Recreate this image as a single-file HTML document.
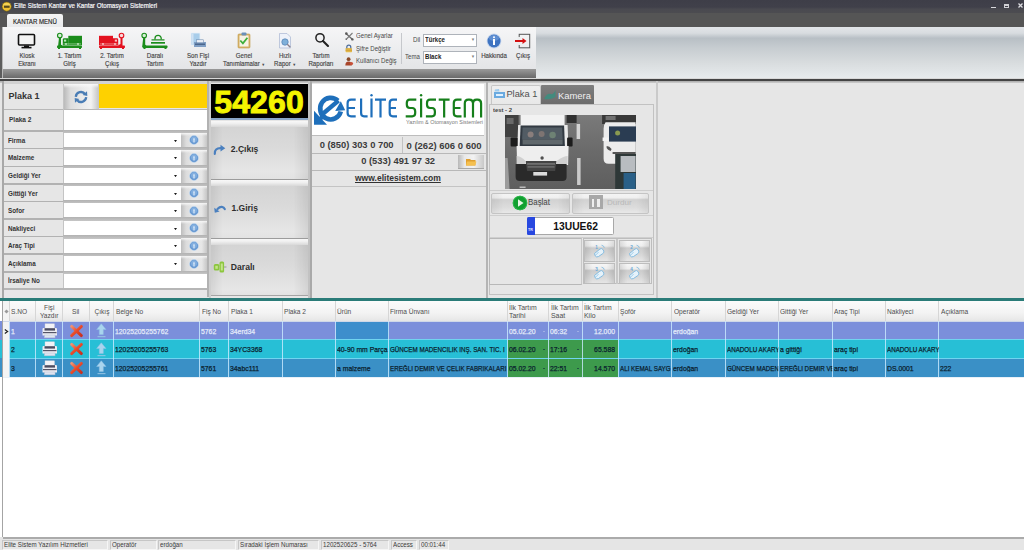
<!DOCTYPE html>
<html><head><meta charset="utf-8">
<style>
*{box-sizing:border-box;}
html,body{margin:0;padding:0;}
body{width:1024px;height:550px;position:relative;overflow:hidden;background:#e5e5e5;font-family:"Liberation Sans",sans-serif;color:#222;}
.a{position:absolute;}
.t{position:absolute;white-space:nowrap;line-height:1;}
/* title */
#title{left:0;top:0;width:1024px;height:13px;background:linear-gradient(#3e3e48,#40404a 55%,#4a4a50 70%,#4c4c50);}
#tabs{left:0;top:13px;width:1024px;height:14px;background:#555555;}
#ribbon{left:0;top:27px;width:1024px;height:51px;background:linear-gradient(#e2e5e8 0%,#d8dce0 12%,#b8bfc5 22%,#c6ccd0 40%,#d8dcde 70%,#e7ebed 100%);}
#rpanel{left:3px;top:27px;width:533px;height:42px;background:linear-gradient(#f6f6f7,#ebecee 60%,#e4e5e7);}
#rbar{left:3px;top:69px;width:533px;height:9px;background:linear-gradient(#9a9a9a,#777 70%,#6a6a6a);}
.rl{position:absolute;font-size:6.9px;color:#444;-webkit-text-stroke:0.15px currentColor;transform:scaleX(0.884);transform-origin:50% 0;text-align:center;line-height:8px;white-space:nowrap;}
/* main */
#main{left:0;top:78px;width:1024px;height:220px;background:#e5e5e5;}
.lab{position:absolute;left:4px;width:59px;background:#e6e6e6;font-size:8px;font-weight:bold;color:#333;padding-left:3px;}
.inp{position:absolute;background:#fff;}
.pbtn{position:absolute;left:180px;width:27px;background:linear-gradient(90deg,#b9b9b9,#efefef 30%,#f5f5f5 60%,#c4c4c4);}
.sep{position:absolute;background:#b5b5b5;}
#teal{left:0;top:298px;width:1024px;height:3px;background:#2a7b78;}
#grid{left:0;top:301px;width:1024px;height:236px;background:#fff;}
#status{left:0;top:537px;width:1024px;height:13px;background:#e4e4e4;border-top:2px solid #a9a9a9;}
.sp{position:absolute;top:2px;height:10px;background:#e6e6e6;border:1px solid #c8c8c8;font-size:7.5px;color:#333;line-height:9px;padding-left:2px;white-space:nowrap;overflow:hidden;}
.hc{position:absolute;top:0;height:20px;border-right:1px solid #d0d0d0;font-size:7.5px;color:#444;line-height:9px;}
.g{-webkit-text-stroke:0.25px currentColor;}
.cell{position:absolute;font-size:7.5px;line-height:18px;white-space:nowrap;overflow:hidden;}
</style></head><body>

<!-- TITLE BAR -->
<div id="title" class="a"></div>
<svg class="a" style="left:1px;top:0.5px" width="12" height="12" viewBox="0 0 12 12"><circle cx="5.7" cy="5.6" r="4.6" fill="#f0c030" stroke="#6a5a10" stroke-width="0.6"/><ellipse cx="5.7" cy="3.8" rx="3.4" ry="1.8" fill="#f8d860" opacity=".8"/><rect x="3" y="4.6" width="5.6" height="2.2" fill="#3a3218" opacity=".85"/></svg>
<div class="t" style="left:14px;top:3.3px;font-size:6.94px;color:#f6f6f8;-webkit-text-stroke:0.2px #f6f6f8;transform:scaleX(0.893);transform-origin:0 50%;">Elite Sistem Kantar ve Kantar Otomasyon Sistemleri</div>
<div class="a" style="left:990.6px;top:6.8px;width:5px;height:1.3px;background:#d8d8dc;"></div>
<div class="a" style="left:1003.7px;top:3.8px;width:5.3px;height:4.2px;background:#d0d0d4;"></div>
<div class="a" style="left:1004.5px;top:5.5px;width:3.5px;height:1.2px;background:#40404a;"></div>
<svg class="a" style="left:1017.5px;top:3.2px" width="5" height="5" viewBox="0 0 5 5"><path d="M0.5 0.5 L4.5 4.5 M4.5 0.5 L0.5 4.5" stroke="#dcdce0" stroke-width="1.3"/></svg>

<!-- TABS -->
<div id="tabs" class="a"></div>
<div class="a" style="left:7px;top:14px;width:56px;height:14px;background:linear-gradient(#f4f4f4,#e8e9eb);border-radius:2px 2px 0 0;"></div>
<div class="t" style="left:13px;top:19.1px;font-size:6.83px;color:#262626;-webkit-text-stroke:0.15px #262626;transform:scaleX(0.893);transform-origin:0 50%;">KANTAR MENÜ</div>

<!-- RIBBON -->
<div id="ribbon" class="a"></div>
<div id="rpanel" class="a"></div>
<div id="rbar" class="a"></div>
<div class="a" style="left:0;top:27px;width:2.2px;height:51px;background:#5c5c5c;"></div>
<div class="a" style="left:2.2px;top:27px;width:1px;height:51px;background:#b8b8b8;"></div>
<!-- ribbon icons -->
<svg class="a" style="left:0;top:27px;" width="540" height="42" viewBox="0 27 540 42">
 <!-- monitor -->
 <rect x="18.5" y="34.5" width="16" height="10.5" rx="1" fill="#f4f4f4" stroke="#111" stroke-width="1.6"/>
 <rect x="24" y="45.5" width="5" height="1.5" fill="#111"/>
 <rect x="21.5" y="46.8" width="10" height="1.6" fill="#111"/>
 <!-- green scale truck -->
 <g fill="#1b8c1b">
  <circle cx="59.8" cy="35.5" r="2.3" fill="#d6f0d6" stroke="#1b8c1b" stroke-width="1.1"/>
  <path d="M59 37.8 h2 v6.5 q0 1 1 1 v1.5 h-4 z"/>
  <rect x="57" y="45.5" width="25" height="2.5" rx="0.8"/>
  <rect x="58" y="47.5" width="2" height="1.5"/><rect x="79" y="47.5" width="2" height="1.5"/>
  <path d="M62.8 39.5 q0 -1.3 1.3 -1.3 h4.4 v7 h-5.7 z"/>
  <rect x="68.3" y="35.8" width="13.7" height="9.4"/>
  <rect x="64" y="39.6" width="2.2" height="2" fill="#b8e8b8"/>
  <rect x="63.5" y="43.6" width="17.5" height="0.7" fill="#a8dca8"/>
  <circle cx="66" cy="44" r="0.9" fill="#c8f0c8"/><circle cx="78" cy="44" r="0.9" fill="#c8f0c8"/>
 </g>
 <!-- red scale truck -->
 <g fill="#e3111f">
  <circle cx="121.5" cy="35.5" r="2.3" fill="#fbdada" stroke="#e3111f" stroke-width="1.1"/>
  <path d="M120.5 37.8 h2 v8.5 h-4 v-1.5 q2 0 2 -1 z"/>
  <rect x="99" y="45.5" width="26" height="2.5" rx="0.8"/>
  <rect x="100" y="47.5" width="2" height="1.5"/><rect x="122" y="47.5" width="2" height="1.5"/>
  <path d="M112.5 38.2 h4.4 q1.3 0 1.3 1.3 v5.7 h-5.7 z"/>
  <rect x="99" y="35.8" width="14" height="9.4"/>
  <rect x="114.8" y="39.6" width="2.2" height="2" fill="#f8c0c0"/>
  <rect x="100" y="43.6" width="17.5" height="0.7" fill="#f4a8a8"/>
  <circle cx="103" cy="44" r="0.9" fill="#fbd0d0"/><circle cx="115" cy="44" r="0.9" fill="#fbd0d0"/>
 </g>
 <!-- darali -->
 <g fill="#1b8c1b">
  <circle cx="144.2" cy="35.5" r="2.3" fill="#d6f0d6" stroke="#1b8c1b" stroke-width="1.1"/>
  <path d="M143.2 37.8 h2 v6.5 q0 1 1 1 v1.5 h-4 z"/>
  <rect x="142.5" y="45.5" width="25" height="2.5" rx="0.8"/>
  <rect x="143.5" y="47.5" width="2" height="1.5"/><rect x="164.5" y="47.5" width="2" height="1.5"/>
  <rect x="151" y="42" width="14" height="1.7"/>
  <rect x="151.5" y="39.3" width="13" height="1.2"/>
  <path d="M155 39.5 v-1.2 a3.1 3 0 1 1 6.2 0 v1.2" fill="none" stroke="#1b8c1b" stroke-width="1.3"/>
 </g>
 <!-- son fisi yazdir (printer+doc) -->
 <rect x="191" y="33" width="9" height="12" fill="#a8cdea" stroke="#e8f0f8" stroke-width="0.8"/>
 <rect x="191.5" y="33.5" width="2" height="11" fill="#cfe2f3"/>
 <path d="M194 42 h12 v5 h-12 z" fill="#7f9ec4"/>
 <rect x="196.5" y="39.8" width="7" height="3" fill="#e9eef6" stroke="#5f7fa8" stroke-width="0.5"/>
 <rect x="195" y="43.5" width="10" height="1.5" fill="#4b668d"/>
 <!-- genel tanimlamalar clipboard -->
 <rect x="238" y="34" width="12" height="14" rx="1" fill="#d8b368" stroke="#c19a4a" stroke-width="0.6"/>
 <rect x="239.5" y="35.5" width="9" height="11" fill="#f6f2e4"/>
 <rect x="241.5" y="32.5" width="5" height="3" rx="1" fill="#6a8fb8"/>
 <path d="M240.3 40.5 l2.6 2.8 l4.5 -5.5" fill="none" stroke="#3fae3a" stroke-width="1.8"/>
 <!-- hizli rapor -->
 <path d="M279.5 33.5 h7.5 l3.5 3.5 v11 h-11 z" fill="#eef2fa" stroke="#a9b6d2" stroke-width="0.7"/>
 <circle cx="285" cy="42" r="3.2" fill="#7fb0da" stroke="#5c87b8" stroke-width="0.8"/>
 <path d="M287.3 44.3 l3 3" stroke="#8a7f8a" stroke-width="1.3"/>
 <!-- tartim raporlari magnifier -->
 <circle cx="320" cy="37.8" r="4.1" fill="none" stroke="#222" stroke-width="1.5"/>
 <path d="M323 41 l5 5" stroke="#222" stroke-width="2.1" stroke-linecap="round"/>
 <!-- small icons -->
 <path d="M346 33.5 l6.5 6" stroke="#6a6a6a" stroke-width="1.3"/>
 <path d="M352.5 33 l-6.5 6.5" stroke="#7a7a7a" stroke-width="1.1"/>
 <circle cx="346.3" cy="33.6" r="1.3" fill="#5a5a5a"/><circle cx="352.4" cy="39.4" r="1.2" fill="#5a5a5a"/>
 <path d="M345.5 39.8 l1.6 -0.3 l-1.3 -1.3 z" fill="#4a4a4a"/>
 <rect x="345.6" y="48" width="6.4" height="4.2" rx="0.6" fill="#e3b84a"/>
 <rect x="345.6" y="49.8" width="6.4" height="0.8" fill="#c89830"/>
 <path d="M346.8 48.2 v-1 a2 2 0 0 1 4 0 v1" fill="none" stroke="#4a6a98" stroke-width="1.2"/>
 <circle cx="348.6" cy="59.2" r="1.9" fill="#8a4a2a"/>
 <path d="M345.3 65.6 q0 -4.2 3.3 -4.2 q3.3 0 3.3 4.2 z" fill="#a8452a"/>
 <circle cx="351.5" cy="63.5" r="1.6" fill="#c8503a"/>
 <!-- separator -->
 <rect x="401" y="33" width="1" height="31" fill="#c6c8cc"/>
 <!-- info -->
 <circle cx="494" cy="41" r="7.4" fill="#c9d8ee"/>
 <circle cx="494" cy="41" r="6.5" fill="#3f74c1"/>
 <path d="M494 35 a6 6 0 0 1 0 0" />
 <ellipse cx="494" cy="38" rx="5" ry="3" fill="#6e9bd8" opacity="0.7"/>
 <circle cx="494" cy="37.3" r="1" fill="#fff"/>
 <rect x="493" y="39" width="2" height="6" fill="#fff"/>
 <!-- exit -->
 <rect x="519.2" y="34.3" width="10.5" height="13.5" fill="none" stroke="#555" stroke-width="1"/>
 <rect x="517.5" y="37" width="3" height="8" fill="#eceeef"/>
 <path d="M515 41 h8.5" stroke="#d41010" stroke-width="2"/>
 <path d="M522.5 38 l4 3 l-4 3 z" fill="#d41010"/>
</svg>
<div class="rl" style="left:12px;top:52px;width:30px;">Kiosk<br>Ekranı</div>
<div class="rl" style="left:54px;top:52px;width:31px;">1. Tartım<br>Giriş</div>
<div class="rl" style="left:97px;top:52px;width:30px;">2. Tartım<br>Çıkış</div>
<div class="rl" style="left:140px;top:52px;width:30px;">Daralı<br>Tartım</div>
<div class="rl" style="left:183px;top:52px;width:30px;">Son Fişi<br>Yazdır</div>
<div class="rl" style="left:219px;top:52px;width:50px;">Genel<br>Tanımlamalar <span style="font-size:4px">&#9660;</span></div>
<div class="rl" style="left:270px;top:52px;width:30px;">Hızlı<br>Rapor <span style="font-size:4px">&#9660;</span></div>
<div class="rl" style="left:303px;top:52px;width:36px;">Tartım<br>Raporları</div>
<div class="t" style="left:356px;top:32.63px;font-size:6.83px;color:#4a4a4a;transform:scaleX(0.893);transform-origin:0 50%;">Genel Ayarlar</div>
<div class="t" style="left:356px;top:45.6px;font-size:6.83px;color:#4a4a4a;transform:scaleX(0.893);transform-origin:0 50%;">Şifre Değiştir</div>
<div class="t" style="left:356px;top:58.3px;font-size:6.83px;color:#4a4a4a;transform:scaleX(0.893);transform-origin:0 50%;">Kullanıcı Değiş</div>
<div class="t" style="left:413px;top:37px;font-size:6.83px;color:#4a4a4a;transform:scaleX(0.893);transform-origin:0 50%;">Dil</div>
<div class="t" style="left:405px;top:54.13px;font-size:6.83px;color:#4a4a4a;transform:scaleX(0.893);transform-origin:0 50%;">Tema</div>
<div class="a" style="left:423px;top:34px;width:54px;height:13px;background:#fff;border:1px solid #aeb3ba;"></div>
<div class="t" style="left:425px;top:36.85px;font-size:6.41px;color:#222;font-weight:bold;transform:scaleX(0.952);transform-origin:0 50%;">Türkçe</div>
<div class="t" style="left:471px;top:37.76px;font-size:4.48px;color:#777;transform:scaleX(0.893);transform-origin:0 50%;">&#9660;</div>
<div class="a" style="left:423px;top:51px;width:54px;height:13px;background:#fff;border:1px solid #aeb3ba;"></div>
<div class="t" style="left:425px;top:53.6px;font-size:6.41px;color:#222;font-weight:bold;transform:scaleX(0.952);transform-origin:0 50%;">Black</div>
<div class="t" style="left:471px;top:55.26px;font-size:4.48px;color:#777;transform:scaleX(0.893);transform-origin:0 50%;">&#9660;</div>
<div class="rl" style="left:479px;top:52px;width:30px;">Hakkında</div>
<div class="rl" style="left:508px;top:52px;width:30px;">Çıkış</div>
<div class="a" style="left:0;top:78px;width:1024px;height:1px;background:#d8d8d8;"></div>
<div class="a" style="left:0;top:79px;width:1024px;height:2px;background:#444;"></div>


<!-- MAIN -->
<!--LEFT-->
<div id="main" class="a" style="top:81px;height:217px;background:#e6e6e6;"></div>
<div class="a" style="left:0;top:81px;width:1024px;height:2.2px;background:linear-gradient(#a8a8a8,#cfcfcf);"></div>
<div class="a" style="left:2px;top:81px;width:2px;height:217px;background:#a8a8a8;"></div>
<div class="a" style="left:207px;top:81px;width:2px;height:216px;background:#b2b2b2;"></div>
<div class="a" style="left:4px;top:81px;width:203px;height:2.5px;background:#d2d2d2;"></div>
<div class="t" style="left:8.5px;top:92px;font-size:9px;font-weight:bold;color:#333;">Plaka 1</div>
<div class="a" style="left:63px;top:84px;width:35px;height:25px;background:linear-gradient(90deg,#b5b5b5,#dedede 22%,#ececec 60%,#f2f2f2 80%,#c9c9c9);"></div>
<div class="a" style="left:63px;top:84px;width:35px;height:4px;background:linear-gradient(#f8f8f8,rgba(240,240,240,0));"></div>
<svg class="a" style="left:73px;top:89.5px" width="16" height="14" viewBox="0 0 16 14"><path d="M2.8 6.8 a5.2 5.2 0 0 1 9.4 -2.6" fill="none" stroke="#4a7db5" stroke-width="2.3"/><path d="M14 1.2 l0.3 4.8 l-4.6 -1 z" fill="#4a7db5"/><path d="M13.2 7.2 a5.2 5.2 0 0 1 -9.4 2.6" fill="none" stroke="#4a7db5" stroke-width="2.3"/><path d="M2 12.8 l-0.3 -4.8 l4.6 1 z" fill="#4a7db5"/></svg>
<div class="a" style="left:98px;top:84px;width:1px;height:25px;background:#c8c8c8;"></div>
<div class="a" style="left:99px;top:83.6px;width:107.5px;height:24.6px;background:#fed100;"></div>
<div class="a" style="left:4px;top:108.6px;width:203px;height:1.5px;background:#b8b8b8;"></div>
<div class="t" style="left:8.5px;top:116.84px;font-size:6.83px;font-weight:bold;color:#333;transform:scaleX(0.952);transform-origin:0 50%;">Plaka 2</div>
<div class="a" style="left:63px;top:110px;width:144px;height:19.5px;background:#fff;"></div>
<div class="a" style="left:62.5px;top:84px;width:1px;height:206px;background:#c4c4c4;"></div>
<div class="a" style="left:4px;top:130.25px;width:59px;height:1.5px;background:#b2b2b2;"></div>
<div class="a" style="left:63px;top:129.50px;width:144px;height:4px;background:linear-gradient(#b2b2b2,#c6c6c6);"></div>
<div class="t" style="left:8px;top:137.84px;font-size:6.62px;font-weight:bold;color:#333;transform:scaleX(0.952);transform-origin:0 50%;">Firma</div>
<div class="a" style="left:63.5px;top:132.80px;width:117px;height:14.30px;background:#fff;"></div>
<svg class="a" style="left:173.6px;top:139.7px" width="3" height="2.2" viewBox="0 0 3 2.2"><path d="M0 0 H3 L1.5 2.2 z" fill="#1a1a1a"/></svg>
<div class="a" style="left:180.5px;top:132.60px;width:26.5px;height:14.80px;background:linear-gradient(90deg,#bdbdbd,#dcdcdc 20%,#e9e9e9 50%,#e6e6e6 80%,#c6c6c6);"></div>
<div class="a" style="left:180.5px;top:132.60px;width:26.5px;height:3px;background:linear-gradient(#f6f6f6,rgba(240,240,240,0));"></div>
<svg class="a" style="left:188.3px;top:134.3px" width="12" height="12" viewBox="0 0 12 12"><circle cx="6" cy="6" r="4.4" fill="#6a9bd3"/><circle cx="6" cy="5.2" r="3" fill="#8cb6e4" opacity=".7"/><circle cx="6" cy="6" r="4.6" fill="none" stroke="#c0d8f0" stroke-width="0.5"/><path d="M6 3.4 L7 5.5 L6.6 5.5 V8.4 H5.4 V5.5 L5 5.5 z" fill="#e4f0fc" opacity=".9"/></svg>
<div class="a" style="left:4px;top:147.85px;width:59px;height:1.5px;background:#b2b2b2;"></div>
<div class="a" style="left:63px;top:147.10px;width:144px;height:4px;background:linear-gradient(#b2b2b2,#c6c6c6);"></div>
<div class="t" style="left:8px;top:155.44px;font-size:6.62px;font-weight:bold;color:#333;transform:scaleX(0.952);transform-origin:0 50%;">Malzeme</div>
<div class="a" style="left:63.5px;top:150.40px;width:117px;height:14.40px;background:#fff;"></div>
<svg class="a" style="left:173.6px;top:157.3px" width="3" height="2.2" viewBox="0 0 3 2.2"><path d="M0 0 H3 L1.5 2.2 z" fill="#1a1a1a"/></svg>
<div class="a" style="left:180.5px;top:150.20px;width:26.5px;height:14.90px;background:linear-gradient(90deg,#bdbdbd,#dcdcdc 20%,#e9e9e9 50%,#e6e6e6 80%,#c6c6c6);"></div>
<div class="a" style="left:180.5px;top:150.20px;width:26.5px;height:3px;background:linear-gradient(#f6f6f6,rgba(240,240,240,0));"></div>
<svg class="a" style="left:188.3px;top:151.9px" width="12" height="12" viewBox="0 0 12 12"><circle cx="6" cy="6" r="4.4" fill="#6a9bd3"/><circle cx="6" cy="5.2" r="3" fill="#8cb6e4" opacity=".7"/><circle cx="6" cy="6" r="4.6" fill="none" stroke="#c0d8f0" stroke-width="0.5"/><path d="M6 3.4 L7 5.5 L6.6 5.5 V8.4 H5.4 V5.5 L5 5.5 z" fill="#e4f0fc" opacity=".9"/></svg>
<div class="a" style="left:4px;top:165.55px;width:59px;height:1.5px;background:#b2b2b2;"></div>
<div class="a" style="left:63px;top:164.80px;width:144px;height:4px;background:linear-gradient(#b2b2b2,#c6c6c6);"></div>
<div class="t" style="left:8px;top:173.24px;font-size:6.62px;font-weight:bold;color:#333;transform:scaleX(0.952);transform-origin:0 50%;">Geldiği Yer</div>
<div class="a" style="left:63.5px;top:168.10px;width:117px;height:14.50px;background:#fff;"></div>
<svg class="a" style="left:173.6px;top:175.1px" width="3" height="2.2" viewBox="0 0 3 2.2"><path d="M0 0 H3 L1.5 2.2 z" fill="#1a1a1a"/></svg>
<div class="a" style="left:180.5px;top:167.90px;width:26.5px;height:15.00px;background:linear-gradient(90deg,#bdbdbd,#dcdcdc 20%,#e9e9e9 50%,#e6e6e6 80%,#c6c6c6);"></div>
<div class="a" style="left:180.5px;top:167.90px;width:26.5px;height:3px;background:linear-gradient(#f6f6f6,rgba(240,240,240,0));"></div>
<svg class="a" style="left:188.3px;top:169.7px" width="12" height="12" viewBox="0 0 12 12"><circle cx="6" cy="6" r="4.4" fill="#6a9bd3"/><circle cx="6" cy="5.2" r="3" fill="#8cb6e4" opacity=".7"/><circle cx="6" cy="6" r="4.6" fill="none" stroke="#c0d8f0" stroke-width="0.5"/><path d="M6 3.4 L7 5.5 L6.6 5.5 V8.4 H5.4 V5.5 L5 5.5 z" fill="#e4f0fc" opacity=".9"/></svg>
<div class="a" style="left:4px;top:183.35px;width:59px;height:1.5px;background:#b2b2b2;"></div>
<div class="a" style="left:63px;top:182.60px;width:144px;height:4px;background:linear-gradient(#b2b2b2,#c6c6c6);"></div>
<div class="t" style="left:8px;top:190.84px;font-size:6.62px;font-weight:bold;color:#333;transform:scaleX(0.952);transform-origin:0 50%;">Gittiği Yer</div>
<div class="a" style="left:63.5px;top:185.90px;width:117px;height:14.20px;background:#fff;"></div>
<svg class="a" style="left:173.6px;top:192.7px" width="3" height="2.2" viewBox="0 0 3 2.2"><path d="M0 0 H3 L1.5 2.2 z" fill="#1a1a1a"/></svg>
<div class="a" style="left:180.5px;top:185.70px;width:26.5px;height:14.70px;background:linear-gradient(90deg,#bdbdbd,#dcdcdc 20%,#e9e9e9 50%,#e6e6e6 80%,#c6c6c6);"></div>
<div class="a" style="left:180.5px;top:185.70px;width:26.5px;height:3px;background:linear-gradient(#f6f6f6,rgba(240,240,240,0));"></div>
<svg class="a" style="left:188.3px;top:187.3px" width="12" height="12" viewBox="0 0 12 12"><circle cx="6" cy="6" r="4.4" fill="#6a9bd3"/><circle cx="6" cy="5.2" r="3" fill="#8cb6e4" opacity=".7"/><circle cx="6" cy="6" r="4.6" fill="none" stroke="#c0d8f0" stroke-width="0.5"/><path d="M6 3.4 L7 5.5 L6.6 5.5 V8.4 H5.4 V5.5 L5 5.5 z" fill="#e4f0fc" opacity=".9"/></svg>
<div class="a" style="left:4px;top:200.85px;width:59px;height:1.5px;background:#b2b2b2;"></div>
<div class="a" style="left:63px;top:200.10px;width:144px;height:4px;background:linear-gradient(#b2b2b2,#c6c6c6);"></div>
<div class="t" style="left:8px;top:208.24px;font-size:6.62px;font-weight:bold;color:#333;transform:scaleX(0.952);transform-origin:0 50%;">Sofor</div>
<div class="a" style="left:63.5px;top:203.40px;width:117px;height:14.00px;background:#fff;"></div>
<svg class="a" style="left:173.6px;top:210.1px" width="3" height="2.2" viewBox="0 0 3 2.2"><path d="M0 0 H3 L1.5 2.2 z" fill="#1a1a1a"/></svg>
<div class="a" style="left:180.5px;top:203.20px;width:26.5px;height:14.50px;background:linear-gradient(90deg,#bdbdbd,#dcdcdc 20%,#e9e9e9 50%,#e6e6e6 80%,#c6c6c6);"></div>
<div class="a" style="left:180.5px;top:203.20px;width:26.5px;height:3px;background:linear-gradient(#f6f6f6,rgba(240,240,240,0));"></div>
<svg class="a" style="left:188.3px;top:204.8px" width="12" height="12" viewBox="0 0 12 12"><circle cx="6" cy="6" r="4.4" fill="#6a9bd3"/><circle cx="6" cy="5.2" r="3" fill="#8cb6e4" opacity=".7"/><circle cx="6" cy="6" r="4.6" fill="none" stroke="#c0d8f0" stroke-width="0.5"/><path d="M6 3.4 L7 5.5 L6.6 5.5 V8.4 H5.4 V5.5 L5 5.5 z" fill="#e4f0fc" opacity=".9"/></svg>
<div class="a" style="left:4px;top:218.15px;width:59px;height:1.5px;background:#b2b2b2;"></div>
<div class="a" style="left:63px;top:217.40px;width:144px;height:4px;background:linear-gradient(#b2b2b2,#c6c6c6);"></div>
<div class="t" style="left:8px;top:225.84px;font-size:6.62px;font-weight:bold;color:#333;transform:scaleX(0.952);transform-origin:0 50%;">Nakliyeci</div>
<div class="a" style="left:63.5px;top:220.70px;width:117px;height:14.50px;background:#fff;"></div>
<svg class="a" style="left:173.6px;top:227.7px" width="3" height="2.2" viewBox="0 0 3 2.2"><path d="M0 0 H3 L1.5 2.2 z" fill="#1a1a1a"/></svg>
<div class="a" style="left:180.5px;top:220.50px;width:26.5px;height:15.00px;background:linear-gradient(90deg,#bdbdbd,#dcdcdc 20%,#e9e9e9 50%,#e6e6e6 80%,#c6c6c6);"></div>
<div class="a" style="left:180.5px;top:220.50px;width:26.5px;height:3px;background:linear-gradient(#f6f6f6,rgba(240,240,240,0));"></div>
<svg class="a" style="left:188.3px;top:222.3px" width="12" height="12" viewBox="0 0 12 12"><circle cx="6" cy="6" r="4.4" fill="#6a9bd3"/><circle cx="6" cy="5.2" r="3" fill="#8cb6e4" opacity=".7"/><circle cx="6" cy="6" r="4.6" fill="none" stroke="#c0d8f0" stroke-width="0.5"/><path d="M6 3.4 L7 5.5 L6.6 5.5 V8.4 H5.4 V5.5 L5 5.5 z" fill="#e4f0fc" opacity=".9"/></svg>
<div class="a" style="left:4px;top:235.95px;width:59px;height:1.5px;background:#b2b2b2;"></div>
<div class="a" style="left:63px;top:235.20px;width:144px;height:4px;background:linear-gradient(#b2b2b2,#c6c6c6);"></div>
<div class="t" style="left:8px;top:243.44px;font-size:6.62px;font-weight:bold;color:#333;transform:scaleX(0.952);transform-origin:0 50%;">Araç Tipi</div>
<div class="a" style="left:63.5px;top:238.50px;width:117px;height:14.20px;background:#fff;"></div>
<svg class="a" style="left:173.6px;top:245.3px" width="3" height="2.2" viewBox="0 0 3 2.2"><path d="M0 0 H3 L1.5 2.2 z" fill="#1a1a1a"/></svg>
<div class="a" style="left:180.5px;top:238.30px;width:26.5px;height:14.70px;background:linear-gradient(90deg,#bdbdbd,#dcdcdc 20%,#e9e9e9 50%,#e6e6e6 80%,#c6c6c6);"></div>
<div class="a" style="left:180.5px;top:238.30px;width:26.5px;height:3px;background:linear-gradient(#f6f6f6,rgba(240,240,240,0));"></div>
<svg class="a" style="left:188.3px;top:239.9px" width="12" height="12" viewBox="0 0 12 12"><circle cx="6" cy="6" r="4.4" fill="#6a9bd3"/><circle cx="6" cy="5.2" r="3" fill="#8cb6e4" opacity=".7"/><circle cx="6" cy="6" r="4.6" fill="none" stroke="#c0d8f0" stroke-width="0.5"/><path d="M6 3.4 L7 5.5 L6.6 5.5 V8.4 H5.4 V5.5 L5 5.5 z" fill="#e4f0fc" opacity=".9"/></svg>
<div class="a" style="left:4px;top:253.45px;width:59px;height:1.5px;background:#b2b2b2;"></div>
<div class="a" style="left:63px;top:252.70px;width:144px;height:4px;background:linear-gradient(#b2b2b2,#c6c6c6);"></div>
<div class="t" style="left:8px;top:261.14px;font-size:6.62px;font-weight:bold;color:#333;transform:scaleX(0.952);transform-origin:0 50%;">Açıklama</div>
<div class="a" style="left:63.5px;top:256.00px;width:117px;height:14.50px;background:#fff;"></div>
<svg class="a" style="left:173.6px;top:263.0px" width="3" height="2.2" viewBox="0 0 3 2.2"><path d="M0 0 H3 L1.5 2.2 z" fill="#1a1a1a"/></svg>
<div class="a" style="left:180.5px;top:255.80px;width:26.5px;height:15.00px;background:linear-gradient(90deg,#bdbdbd,#dcdcdc 20%,#e9e9e9 50%,#e6e6e6 80%,#c6c6c6);"></div>
<div class="a" style="left:180.5px;top:255.80px;width:26.5px;height:3px;background:linear-gradient(#f6f6f6,rgba(240,240,240,0));"></div>
<svg class="a" style="left:188.3px;top:257.6px" width="12" height="12" viewBox="0 0 12 12"><circle cx="6" cy="6" r="4.4" fill="#6a9bd3"/><circle cx="6" cy="5.2" r="3" fill="#8cb6e4" opacity=".7"/><circle cx="6" cy="6" r="4.6" fill="none" stroke="#c0d8f0" stroke-width="0.5"/><path d="M6 3.4 L7 5.5 L6.6 5.5 V8.4 H5.4 V5.5 L5 5.5 z" fill="#e4f0fc" opacity=".9"/></svg>
<div class="a" style="left:4px;top:271.25px;width:59px;height:1.5px;background:#b2b2b2;"></div>
<div class="a" style="left:63px;top:270.50px;width:144px;height:3.5px;background:linear-gradient(#b2b2b2,#c6c6c6);"></div>
<div class="t" style="left:8px;top:278.34px;font-size:6.62px;font-weight:bold;color:#333;transform:scaleX(0.952);transform-origin:0 50%;">İrsaliye No</div>
<div class="a" style="left:63.5px;top:274.00px;width:143.5px;height:14.00px;background:#fff;"></div>
<div class="a" style="left:4px;top:288px;width:203px;height:1.5px;background:#b6b6b6;"></div>
<div class="a" style="left:4px;top:289.5px;width:203px;height:8px;background:#e8e6e8;"></div>
<!--/LEFT-->
<!--MID-->
<div class="a" style="left:209px;top:81px;width:2px;height:217px;background:#cfcfcf;"></div>
<div class="a" style="left:308.3px;top:81px;width:2px;height:217px;background:#c2c2c2;"></div>
<div class="a" style="left:310.3px;top:81px;width:1.7px;height:217px;background:#a9a9a9;"></div>
<div class="a" style="left:210.8px;top:84px;width:97.5px;height:34.4px;background:#000;"></div>
<div class="t" style="left:214.3px;top:86.3px;font-size:32px;font-weight:bold;color:#f4f400;letter-spacing:0.1px;-webkit-text-stroke:0.9px #f4f400;">54260</div>
<div class="a" style="left:210.8px;top:118.2px;width:97.5px;height:1.8px;background:#8aa6c6;"></div>
<div class="a" style="left:210.7px;top:120.6px;width:97.6px;height:58.900000000000006px;background:linear-gradient(90deg,rgba(0,0,0,0.07),rgba(0,0,0,0) 12%,rgba(0,0,0,0) 85%,rgba(0,0,0,0.08)),linear-gradient(#d4d4d4 10%,#dadada 45%,#e6e6e6 88%,#e2e2e2);"></div>
<div class="a" style="left:210.7px;top:120.6px;width:97.6px;height:6px;background:linear-gradient(#f8f8f8,#f0f0f0 40%,#d8d8d8);"></div>
<div class="a" style="left:210.7px;top:178.5px;width:97.6px;height:1px;background:#9c9c9c;"></div>
<div class="a" style="left:210.7px;top:180px;width:97.6px;height:58.5px;background:linear-gradient(90deg,rgba(0,0,0,0.07),rgba(0,0,0,0) 12%,rgba(0,0,0,0) 85%,rgba(0,0,0,0.08)),linear-gradient(#d4d4d4 10%,#dadada 45%,#e6e6e6 88%,#e2e2e2);"></div>
<div class="a" style="left:210.7px;top:180px;width:97.6px;height:6px;background:linear-gradient(#f8f8f8,#f0f0f0 40%,#d8d8d8);"></div>
<div class="a" style="left:210.7px;top:237.5px;width:97.6px;height:1px;background:#9c9c9c;"></div>
<div class="a" style="left:210.7px;top:239px;width:97.6px;height:57px;background:linear-gradient(90deg,rgba(0,0,0,0.07),rgba(0,0,0,0) 12%,rgba(0,0,0,0) 85%,rgba(0,0,0,0.08)),linear-gradient(#d4d4d4 10%,#dadada 45%,#e6e6e6 88%,#e2e2e2);"></div>
<div class="a" style="left:210.7px;top:239px;width:97.6px;height:6px;background:linear-gradient(#f8f8f8,#f0f0f0 40%,#d8d8d8);"></div>
<div class="a" style="left:210.7px;top:295.2px;width:97.6px;height:1px;background:#a4a4a4;"></div>
<div class="t" style="left:230.8px;top:145.4px;font-size:8.55px;font-weight:bold;color:#2e2e2e;">2.Çıkış</div>
<div class="t" style="left:231.5px;top:204px;font-size:8.5px;font-weight:bold;color:#2e2e2e;">1.Giriş</div>
<div class="t" style="left:230.8px;top:262.6px;font-size:8.6px;font-weight:bold;color:#2e2e2e;">Daralı</div>
<svg class="a" style="left:213px;top:144px" width="14" height="11" viewBox="0 0 14 11"><path d="M1.8 9.8 C1.5 6 3.5 4 8 4.2" fill="none" stroke="#4b80bf" stroke-width="2.2" stroke-linecap="round"/><path d="M7.5 0.8 L12.3 4.3 L7.5 7.6 z" fill="#4b80bf"/></svg>
<svg class="a" style="left:213px;top:203.5px" width="14" height="10" viewBox="0 0 14 10"><path d="M11.8 5.2 C10.8 2.5 7.5 1.8 4.5 5" fill="none" stroke="#4b80bf" stroke-width="2.2" stroke-linecap="round"/><path d="M1.2 3.8 L1.8 8.8 L6.6 7.6 z" fill="#4b80bf"/></svg>
<svg class="a" style="left:213px;top:261px" width="14" height="12" viewBox="0 0 14 12"><rect x="0.8" y="3" width="5.5" height="6.5" rx="1.5" fill="#8cc63e"/><rect x="6.5" y="0.6" width="4.6" height="11" rx="1.5" fill="#8cc63e"/><rect x="2.3" y="4.8" width="2.5" height="3" fill="#c5e48c"/><rect x="7.8" y="2.5" width="2" height="7" fill="#c5e48c"/><rect x="11" y="5.5" width="2.5" height="1" fill="#9a9a9a"/></svg>
<div class="a" style="left:312px;top:84px;width:172px;height:51px;background:#fff;"></div>
<div class="a" style="left:312px;top:134.8px;width:172px;height:1.7px;background:#bdbdbd;"></div>
<svg class="a" style="left:312px;top:84px" width="172" height="51" viewBox="312 84 172 51">
<g fill="none" stroke="#1e6fbb" stroke-width="2.2">
<path d="M337.9 100.8 A10.5 10.8 0 1 0 340.8 111.5" stroke-width="4.7"/>
<path d="M320.5 115.8 L338.5 100.6" stroke-width="4.4"/>
<path d="M355.7 99.6 H351 Q347.6 99.6 347.6 103 V113 Q347.6 116.3 351 116.3 H355.7 M347.6 108 H355"/>
<path d="M361.1 98.5 V113 Q361.1 116.3 364 116.3 H367.6"/>
<path d="M371.5 98.5 V117.4"/>
<path d="M375 99.6 H386 M380.5 99.6 V117.4"/>
<path d="M397 99.6 H392.9 Q389.7 99.6 389.7 103 V113 Q389.7 116.3 392.9 116.3 H397 M389.7 108 H396"/>
</g>
<circle cx="371.5" cy="95.2" r="1.2" fill="#1e6fbb"/>
<path d="M335.2 111 L340.8 101.2 L345.2 110.2 z" fill="#1e6fbb"/>
<path d="M314 110.8 L314 124.8 L327 124.8 z" fill="#1e6fbb"/>
<path d="M317.5 121.5 L323.5 115.8" stroke="#1e6fbb" stroke-width="4.2"/>
<g fill="none" stroke="#167f1b" stroke-width="2.2">
<path d="M416.3 99.6 H409.8 Q406.8 99.6 406.8 103 V104.6 Q406.8 108 409.8 108 H412.2 Q415.2 108 415.2 111.4 V113 Q415.2 116.3 412.2 116.3 H405.7"/>
<path d="M421.1 98.5 V117.4"/>
<path d="M436 99.6 H430 Q427 99.6 427 103 V104.6 Q427 108 430 108 H432 Q434.9 108 434.9 111.4 V113 Q434.9 116.3 432 116.3 H425.9"/>
<path d="M438.7 99.6 H449.6 M444.15 99.6 V117.4"/>
<path d="M461.5 99.6 H457 Q453.8 99.6 453.8 103 V113 Q453.8 116.3 457 116.3 H461.5 M453.8 108 H460.5"/>
<path d="M464.8 117.4 V103.2 Q464.8 99.6 468.4 99.6 H469.5 Q473 99.6 473 103.2 V117.4 M473 103.2 Q473 99.6 476.5 99.6 H477.6 Q481.1 99.6 481.1 103.2 V117.4"/>
</g>
<circle cx="421.1" cy="95.2" r="1.2" fill="#167f1b"/>
</svg>
<div class="t" style="left:405.7px;top:118.97px;font-size:6.05px;color:#7a7a7a;transform:scaleX(0.893);transform-origin:0 50%;">Yazılım &amp; Otomasyon Sistemleri</div>
<div class="a" style="left:312px;top:136.5px;width:174px;height:16.5px;background:#e6e6e6;"></div>
<div class="a" style="left:401.5px;top:137px;width:1.3px;height:15.5px;background:#c2c2c2;"></div>
<div class="a" style="left:312px;top:152.5px;width:174px;height:1.5px;background:#b8b8b8;"></div>
<div class="t" style="left:319.7px;top:140.8px;font-size:9.37px;font-weight:bold;color:#3c3c3c;">0 (850) 303 0 700</div>
<div class="t" style="left:406.5px;top:140.8px;font-size:9.5px;font-weight:bold;color:#3c3c3c;">0 (262) 606 0 600</div>
<div class="t" style="left:361.2px;top:156.5px;font-size:9.37px;font-weight:bold;color:#3c3c3c;">0 (533) 491 97 32</div>
<div class="a" style="left:458.3px;top:155px;width:26.2px;height:13.7px;background:linear-gradient(90deg,#b8b8b8,#e8e8e8 25%,#f2f2f2 60%,#c8c8c8);border-bottom:1px solid #a8a8a8;"></div>
<svg class="a" style="left:465px;top:156.5px" width="12" height="10" viewBox="0 0 12 10"><path d="M1 2 h4 l1 1 h4.5 v5.5 h-9.5 z" fill="#e0a030"/><path d="M2 4.5 h9.5 l-1.5 4 h-9 z" fill="#f5c050"/></svg>
<div class="a" style="left:312px;top:169.5px;width:174px;height:1.5px;background:#b8b8b8;"></div>
<div class="t" style="left:355px;top:174px;font-size:8.53px;font-weight:bold;color:#333;text-decoration:underline;">www.elitesistem.com</div>
<div class="a" style="left:312px;top:186px;width:174px;height:1.3px;background:#c4c4c4;"></div>
<div class="a" style="left:486px;top:81px;width:2px;height:217px;background:#b4b4b4;"></div>
<!--/MID-->
<!--CAM-->
<div class="a" style="left:489px;top:103.5px;width:165px;height:191px;border:1px solid #c2c2c2;background:#e6e6e6;"></div>
<div class="a" style="left:656px;top:81px;width:2px;height:217px;background:#cacaca;"></div>
<div class="a" style="left:490.5px;top:84.8px;width:50px;height:19.5px;background:linear-gradient(#eeeeee,#e8e8e8);border:1px solid #c6c6c6;border-bottom:none;border-radius:2px 2px 0 0;"></div>
<svg class="a" style="left:493px;top:88px" width="13" height="11" viewBox="0 0 13 11"><path d="M1 4 h11 v6 h-11 z" fill="#6aaae0"/><path d="M2 1.5 l4 -0.5 l0.5 2.5 h-5 z" fill="#9ccbf0"/><rect x="3" y="6" width="7" height="2" fill="#dff0ff"/></svg>
<div class="t" style="left:506.4px;top:90px;font-size:9.3px;color:#505050;">Plaka 1</div>
<div class="a" style="left:540.7px;top:85px;width:53.5px;height:18.5px;background:linear-gradient(#7e7e7e,#6c6c6c);border-radius:1px 1px 0 0;"></div>
<svg class="a" style="left:543px;top:88px" width="14" height="12" viewBox="0 0 14 12"><path d="M1.5 10 q3 -5 6 -4 q3 1 5 -4 v7 q-5 3 -11 2 z" fill="#3a8f80" opacity=".85"/></svg>
<div class="t" style="left:557.9px;top:90.6px;font-size:9.45px;color:#f0f0f0;">Kamera</div>
<div class="t" style="left:493px;top:107.05px;font-size:6.20px;font-weight:bold;color:#444;transform:scaleX(0.952);transform-origin:0 50%;">test - 2</div>
<svg class="a" style="left:505.4px;top:115px" width="130.6" height="73.5" viewBox="505.4 115 130.6 73.5">
<defs><linearGradient id="road" x1="0" y1="0" x2="0" y2="1"><stop offset="0" stop-color="#7a7a7a"/><stop offset="0.5" stop-color="#6a6a6a"/><stop offset="1" stop-color="#5e5e5e"/></linearGradient></defs>
<rect x="505" y="115" width="131" height="74" fill="url(#road)"/>
<path d="M505 115 h14 v22 h-14 z" fill="#404040"/>
<rect x="507" y="118" width="7" height="6" fill="#6a6a6a"/>
<path d="M505 158 l3 0 l2 31 h-5 z" fill="#9c9c9c"/>
<rect x="577" y="124" width="3.5" height="15" fill="#d4d4d4"/>
<rect x="577.5" y="158" width="3.5" height="27" fill="#cacaca"/>
<rect x="567" y="115" width="10" height="8" fill="#303030"/>
<!-- van -->
<rect x="521" y="115" width="44" height="11" fill="#f2f2f2"/>
<path d="M518.5 125 h49.5 l0.8 22 h-51 z" fill="#eaeaea"/>
<path d="M521 125.5 h43.5 l0.8 20.5 h-45.2 z" fill="#323a42"/>
<path d="M523 127.5 h39.5 l0.6 12 h-40.6 z" fill="#525c64"/>
<circle cx="531" cy="134.5" r="3" fill="#8a7e7c"/><circle cx="542" cy="134" r="3" fill="#7e7472"/><circle cx="553" cy="135" r="3.2" fill="#6e8274"/>
<rect x="523" y="139.5" width="40" height="5" fill="#60686c"/>
<rect x="511" y="137.5" width="7" height="9" rx="1" fill="#1c1c1c"/>
<rect x="567.5" y="137.5" width="5.5" height="9" rx="1" fill="#1c1c1c"/>
<path d="M517 146 h52 l-0.5 19 h-51 z" fill="#eeeeee"/>
<circle cx="542.5" cy="158" r="1.7" fill="#505050"/>
<path d="M516 164 h51 v13 q0 4 -4 4 h-43 q-4 0 -4 -4 z" fill="#2a2a2a"/>
<path d="M526 161 h31 l-1.5 10 h-28 z" fill="#444"/>
<rect x="527.5" y="163.5" width="28" height="0.9" fill="#9a9a9a"/>
<rect x="528" y="166.5" width="27" height="0.9" fill="#8a8a8a"/>
<path d="M517 156 q4 0 9 5 v3 h-9 z" fill="#d0d0d0"/>
<path d="M568 156 q-4 0 -11 5 v3 h11 z" fill="#d0d0d0"/>
<rect x="533.7" y="172" width="13.8" height="3.6" fill="#dcdcdc"/>
<rect x="520" y="186.5" width="6" height="1.5" fill="#bbb"/>
<!-- right cars -->
<rect x="602.5" y="115" width="34" height="9" fill="#383838"/>
<rect x="606" y="116" width="10" height="4" fill="#707070"/>
<path d="M606 122.3 h30 v41.4 h-27 q-5 0 -5 -5 v-30 q0 -4 2 -6.4 z" fill="#ececec"/>
<rect x="609.4" y="126.4" width="27" height="15.2" fill="#2a3c52"/>
<circle cx="618" cy="133" r="2.5" fill="#8a9a50"/>
<rect x="603" y="137.5" width="6" height="3.5" fill="#f4f4f4"/>
<path d="M607 146 q3 0 5 3 l-1 2 q-3 -1 -4 -3 z" fill="#555"/>
<rect x="613" y="152" width="23" height="2" fill="#555"/>
<rect x="615.6" y="154" width="20.8" height="35" fill="#2e3838"/>
<rect x="621" y="156" width="15" height="16" fill="#b8bcc0"/>
<rect x="624" y="173" width="12" height="16" fill="#2a6088"/>
</svg>
<div class="a" style="left:490px;top:190.3px;width:163px;height:1px;background:#cdcdcd;"></div>
<div class="a" style="left:491px;top:192.6px;width:79px;height:21.4px;border:1px solid #c4c4c4;border-radius:2px;background:linear-gradient(90deg,rgba(0,0,0,0.06),rgba(0,0,0,0) 15%,rgba(0,0,0,0) 85%,rgba(0,0,0,0.06)),linear-gradient(#f4f4f4 0%,#f0f0f0 20%,#d2d2d2 30%,#dcdcdc 70%,#e8e8e8);"></div>
<div class="a" style="left:572.2px;top:192.6px;width:76.79999999999995px;height:21.4px;border:1px solid #c4c4c4;border-radius:2px;background:linear-gradient(90deg,rgba(0,0,0,0.06),rgba(0,0,0,0) 15%,rgba(0,0,0,0) 85%,rgba(0,0,0,0.06)),linear-gradient(#f4f4f4 0%,#f0f0f0 20%,#d2d2d2 30%,#dcdcdc 70%,#e8e8e8);"></div>
<svg class="a" style="left:511.5px;top:194.5px" width="16" height="16" viewBox="0 0 16 16"><circle cx="8" cy="8" r="7.3" fill="#11a030"/><circle cx="8" cy="8" r="6.8" fill="none" stroke="#3cc35a" stroke-width="0.6"/><path d="M6 4.3 L11.5 8 L6 11.7 z" fill="#e6f6e6"/></svg>
<div class="t" style="left:528px;top:198px;font-size:8.85px;color:#444;transform:scaleX(0.893);transform-origin:0 50%;">Başlat</div>
<div class="a" style="left:588.5px;top:195.4px;width:14.8px;height:14.1px;background:#a8a8a8;"></div>
<div class="a" style="left:592.2px;top:198.5px;width:2.3px;height:8px;background:#eee;"></div>
<div class="a" style="left:597.3px;top:198.5px;width:2.3px;height:8px;background:#eee;"></div>
<div class="t" style="left:607px;top:198.5px;font-size:8.1px;color:#b8b8b8;">Durdur</div>
<div class="a" style="left:490px;top:215.2px;width:163px;height:1px;background:#cfcfcf;"></div>
<div class="a" style="left:526.7px;top:217px;width:87px;height:18.2px;background:#fff;border:1px solid #a8a8a8;border-radius:1.5px;"></div>
<div class="a" style="left:526.7px;top:217px;width:8.5px;height:18.2px;background:#2848e0;border-radius:1.5px 0 0 1.5px;"></div>
<div class="t" style="left:528.2px;top:229.41px;font-size:3.78px;color:#e8e8ff;font-weight:bold;transform:scaleX(0.952);transform-origin:0 50%;">TR</div>
<div class="t" style="left:553.3px;top:222px;font-size:10.3px;font-weight:bold;color:#111;">13UUE62</div>
<div class="a" style="left:490px;top:236.6px;width:163px;height:1px;background:#cfcfcf;"></div>
<div class="a" style="left:489px;top:237.5px;width:93.3px;height:47px;border:1px solid #b8b8b8;border-right-color:#c8c8c8;background:#e6e6e6;"></div>
<div class="a" style="left:582.7px;top:238.3px;width:69px;height:46px;border:1px solid #bdbdbd;background:#e6e6e6;"></div>
<div class="a" style="left:616px;top:239px;width:1.5px;height:45px;background:#c8c8c8;"></div>
<div class="a" style="left:584px;top:240px;width:30.5px;height:21.5px;border:1px solid #bdbdbd;background:linear-gradient(90deg,rgba(0,0,0,0.10),rgba(0,0,0,0) 25%,rgba(0,0,0,0) 75%,rgba(0,0,0,0.10)),linear-gradient(#f6f6f6 0%,#eeeeee 25%,#cccccc 35%,#d8d8d8 70%,#e6e6e6);"></div>
<svg class="a" style="left:592px;top:243.5px" width="15" height="14" viewBox="0 0 15 14"><path d="M2.5 9.5 l5.5 -4.5 q1.8 -1.2 3 0.6 l0.8 1.6 q0.4 1.8 -1.6 2.8 l-3.8 2.6 q-2 1 -3.2 -0.8 z" fill="#e6f2fa" stroke="#7ab8e0" stroke-width="0.9"/><path d="M3.5 11 q2 -1 3 -3" fill="none" stroke="#8ac4e8" stroke-width="0.7"/><path d="M9.5 1.2 q2.5 0.3 2.8 2.6" fill="none" stroke="#7ab8e0" stroke-width="0.8"/><text x="3.2" y="5.2" font-size="4.6" font-family="Liberation Sans" font-weight="bold" fill="#6aa8d8">1</text></svg>
<div class="a" style="left:619px;top:240px;width:30.5px;height:21.5px;border:1px solid #bdbdbd;background:linear-gradient(90deg,rgba(0,0,0,0.10),rgba(0,0,0,0) 25%,rgba(0,0,0,0) 75%,rgba(0,0,0,0.10)),linear-gradient(#f6f6f6 0%,#eeeeee 25%,#cccccc 35%,#d8d8d8 70%,#e6e6e6);"></div>
<svg class="a" style="left:627px;top:243.5px" width="15" height="14" viewBox="0 0 15 14"><path d="M2.5 9.5 l5.5 -4.5 q1.8 -1.2 3 0.6 l0.8 1.6 q0.4 1.8 -1.6 2.8 l-3.8 2.6 q-2 1 -3.2 -0.8 z" fill="#e6f2fa" stroke="#7ab8e0" stroke-width="0.9"/><path d="M3.5 11 q2 -1 3 -3" fill="none" stroke="#8ac4e8" stroke-width="0.7"/><path d="M9.5 1.2 q2.5 0.3 2.8 2.6" fill="none" stroke="#7ab8e0" stroke-width="0.8"/><text x="3.2" y="5.2" font-size="4.6" font-family="Liberation Sans" font-weight="bold" fill="#6aa8d8">2</text></svg>
<div class="a" style="left:584px;top:262.8px;width:30.5px;height:21.5px;border:1px solid #bdbdbd;background:linear-gradient(90deg,rgba(0,0,0,0.10),rgba(0,0,0,0) 25%,rgba(0,0,0,0) 75%,rgba(0,0,0,0.10)),linear-gradient(#f6f6f6 0%,#eeeeee 25%,#cccccc 35%,#d8d8d8 70%,#e6e6e6);"></div>
<svg class="a" style="left:592px;top:266.3px" width="15" height="14" viewBox="0 0 15 14"><path d="M2.5 9.5 l5.5 -4.5 q1.8 -1.2 3 0.6 l0.8 1.6 q0.4 1.8 -1.6 2.8 l-3.8 2.6 q-2 1 -3.2 -0.8 z" fill="#e6f2fa" stroke="#7ab8e0" stroke-width="0.9"/><path d="M3.5 11 q2 -1 3 -3" fill="none" stroke="#8ac4e8" stroke-width="0.7"/><path d="M9.5 1.2 q2.5 0.3 2.8 2.6" fill="none" stroke="#7ab8e0" stroke-width="0.8"/><text x="3.2" y="5.2" font-size="4.6" font-family="Liberation Sans" font-weight="bold" fill="#6aa8d8">3</text></svg>
<div class="a" style="left:619px;top:262.8px;width:30.5px;height:21.5px;border:1px solid #bdbdbd;background:linear-gradient(90deg,rgba(0,0,0,0.10),rgba(0,0,0,0) 25%,rgba(0,0,0,0) 75%,rgba(0,0,0,0.10)),linear-gradient(#f6f6f6 0%,#eeeeee 25%,#cccccc 35%,#d8d8d8 70%,#e6e6e6);"></div>
<svg class="a" style="left:627px;top:266.3px" width="15" height="14" viewBox="0 0 15 14"><path d="M2.5 9.5 l5.5 -4.5 q1.8 -1.2 3 0.6 l0.8 1.6 q0.4 1.8 -1.6 2.8 l-3.8 2.6 q-2 1 -3.2 -0.8 z" fill="#e6f2fa" stroke="#7ab8e0" stroke-width="0.9"/><path d="M3.5 11 q2 -1 3 -3" fill="none" stroke="#8ac4e8" stroke-width="0.7"/><path d="M9.5 1.2 q2.5 0.3 2.8 2.6" fill="none" stroke="#7ab8e0" stroke-width="0.8"/><text x="3.2" y="5.2" font-size="4.6" font-family="Liberation Sans" font-weight="bold" fill="#6aa8d8">4</text></svg>
<!--/CAM-->
<div id="teal" class="a"></div>
<!--GRID-->
<div id="grid" class="a"></div>
<div class="a" style="left:0;top:321.1px;width:1.6px;height:18.7px;background:#7b8fdb;"></div>
<div class="a" style="left:0;top:339.8px;width:1.6px;height:18.6px;background:#27bfd6;"></div>
<div class="a" style="left:0;top:358.4px;width:1.6px;height:18.2px;background:#3a90c6;"></div>
<div class="a" style="left:1.6px;top:301px;width:1.3px;height:236px;background:#a4a4a4;"></div>
<div class="a" style="left:2.5px;top:301px;width:1021.5px;height:20px;background:linear-gradient(#fbfbfb,#f3f3f3 60%,#e6e6e6);"></div>
<div class="a" style="left:2.5px;top:301px;width:6.5px;height:76px;background:#f4f4f4;"></div>
<div class="a" style="left:8.5px;top:301px;width:1px;height:20px;background:#d6d6d6;"></div>
<div class="a" style="left:35.3px;top:301px;width:1px;height:20px;background:#d6d6d6;"></div>
<div class="a" style="left:61.8px;top:301px;width:1px;height:20px;background:#d6d6d6;"></div>
<div class="a" style="left:89.1px;top:301px;width:1px;height:20px;background:#d6d6d6;"></div>
<div class="a" style="left:113.0px;top:301px;width:1px;height:20px;background:#d6d6d6;"></div>
<div class="a" style="left:199.0px;top:301px;width:1px;height:20px;background:#d6d6d6;"></div>
<div class="a" style="left:228.0px;top:301px;width:1px;height:20px;background:#d6d6d6;"></div>
<div class="a" style="left:281.5px;top:301px;width:1px;height:20px;background:#d6d6d6;"></div>
<div class="a" style="left:335.0px;top:301px;width:1px;height:20px;background:#d6d6d6;"></div>
<div class="a" style="left:388.0px;top:301px;width:1px;height:20px;background:#d6d6d6;"></div>
<div class="a" style="left:507.0px;top:301px;width:1px;height:20px;background:#d6d6d6;"></div>
<div class="a" style="left:548.0px;top:301px;width:1px;height:20px;background:#d6d6d6;"></div>
<div class="a" style="left:581.8px;top:301px;width:1px;height:20px;background:#d6d6d6;"></div>
<div class="a" style="left:617.8px;top:301px;width:1px;height:20px;background:#d6d6d6;"></div>
<div class="a" style="left:671.3px;top:301px;width:1px;height:20px;background:#d6d6d6;"></div>
<div class="a" style="left:725.0px;top:301px;width:1px;height:20px;background:#d6d6d6;"></div>
<div class="a" style="left:778.0px;top:301px;width:1px;height:20px;background:#d6d6d6;"></div>
<div class="a" style="left:832.0px;top:301px;width:1px;height:20px;background:#d6d6d6;"></div>
<div class="a" style="left:885.0px;top:301px;width:1px;height:20px;background:#d6d6d6;"></div>
<div class="a" style="left:938.2px;top:301px;width:1px;height:20px;background:#d6d6d6;"></div>
<div class="a" style="left:4.5px;top:309.5px;width:3px;height:3px;background:#9a9a9a;transform:rotate(45deg);"></div>
<div class="t" style="left:10.5px;top:308.20px;font-size:7.39px;color:#4d4d4d;transform:scaleX(0.893);transform-origin:0 50%;">S.NO</div>
<div class="t" style="left:35.8px;width:26.5px;text-align:center;top:304.20px;font-size:7.39px;color:#4d4d4d;transform:scaleX(0.893);transform-origin:50% 50%;">Fişi</div>
<div class="t" style="left:35.8px;width:26.5px;text-align:center;top:312.40px;font-size:7.39px;color:#4d4d4d;transform:scaleX(0.893);transform-origin:50% 50%;">Yazdır</div>
<div class="t" style="left:62.3px;width:27.299999999999997px;text-align:center;top:308.20px;font-size:7.39px;color:#4d4d4d;transform:scaleX(0.893);transform-origin:50% 50%;">Sil</div>
<div class="t" style="left:89.6px;width:23.900000000000006px;text-align:center;top:308.20px;font-size:7.39px;color:#4d4d4d;transform:scaleX(0.893);transform-origin:50% 50%;">Çıkış</div>
<div class="t" style="left:115.5px;top:308.20px;font-size:7.39px;color:#4d4d4d;transform:scaleX(0.893);transform-origin:0 50%;">Belge No</div>
<div class="t" style="left:201.5px;top:308.20px;font-size:7.39px;color:#4d4d4d;transform:scaleX(0.893);transform-origin:0 50%;">Fiş No</div>
<div class="t" style="left:230.5px;top:308.20px;font-size:7.39px;color:#4d4d4d;transform:scaleX(0.893);transform-origin:0 50%;">Plaka 1</div>
<div class="t" style="left:284px;top:308.20px;font-size:7.39px;color:#4d4d4d;transform:scaleX(0.893);transform-origin:0 50%;">Plaka 2</div>
<div class="t" style="left:337.2px;top:308.20px;font-size:7.39px;color:#4d4d4d;transform:scaleX(0.893);transform-origin:0 50%;">Ürün</div>
<div class="t" style="left:390.2px;top:308.20px;font-size:7.39px;color:#4d4d4d;transform:scaleX(0.893);transform-origin:0 50%;">Firma Ünvanı</div>
<div class="t" style="left:620px;top:308.20px;font-size:7.39px;color:#4d4d4d;transform:scaleX(0.893);transform-origin:0 50%;">Şoför</div>
<div class="t" style="left:673.5px;top:308.20px;font-size:7.39px;color:#4d4d4d;transform:scaleX(0.893);transform-origin:0 50%;">Operatör</div>
<div class="t" style="left:727.3px;top:308.20px;font-size:7.39px;color:#4d4d4d;transform:scaleX(0.893);transform-origin:0 50%;">Geldiği Yer</div>
<div class="t" style="left:780.3px;top:308.20px;font-size:7.39px;color:#4d4d4d;transform:scaleX(0.893);transform-origin:0 50%;">Gittiği Yer</div>
<div class="t" style="left:834.3px;top:308.20px;font-size:7.39px;color:#4d4d4d;transform:scaleX(0.893);transform-origin:0 50%;">Araç Tipi</div>
<div class="t" style="left:887.3px;top:308.20px;font-size:7.39px;color:#4d4d4d;transform:scaleX(0.893);transform-origin:0 50%;">Nakliyeci</div>
<div class="t" style="left:940.5px;top:308.20px;font-size:7.39px;color:#4d4d4d;transform:scaleX(0.893);transform-origin:0 50%;">Açıklama</div>
<div class="t" style="left:509.3px;top:304.08px;font-size:7.73px;color:#4d4d4d;transform:scaleX(0.893);transform-origin:0 50%;">İlk Tartım</div>
<div class="t" style="left:509.3px;top:312.28px;font-size:7.73px;color:#4d4d4d;transform:scaleX(0.893);transform-origin:0 50%;">Tarihi</div>
<div class="t" style="left:550.5px;top:304.08px;font-size:7.73px;color:#4d4d4d;transform:scaleX(0.893);transform-origin:0 50%;">İlk Tartım</div>
<div class="t" style="left:550.5px;top:312.28px;font-size:7.73px;color:#4d4d4d;transform:scaleX(0.893);transform-origin:0 50%;">Saat</div>
<div class="t" style="left:584.3px;top:304.08px;font-size:7.73px;color:#4d4d4d;transform:scaleX(0.893);transform-origin:0 50%;">İlk Tartım</div>
<div class="t" style="left:584.3px;top:312.28px;font-size:7.73px;color:#4d4d4d;transform:scaleX(0.893);transform-origin:0 50%;">Kilo</div>
<div class="a" style="left:9px;top:321.1px;width:1015px;height:18.69999999999999px;background:#7b8fdb;"></div>
<div class="a" style="left:9px;top:339.8px;width:1015px;height:18.599999999999966px;background:#27bfd6;"></div>
<div class="a" style="left:9px;top:358.4px;width:1015px;height:18.200000000000045px;background:#3a90c6;"></div>
<div class="a" style="left:335.5px;top:321.1px;width:53px;height:18.7px;background:#3d8ecc;"></div>
<div class="a" style="left:507.5px;top:339.8px;width:110.8px;height:18.599999999999966px;background:#3d9a4c;"></div>
<div class="a" style="left:507.5px;top:358.4px;width:110.8px;height:18.200000000000045px;background:#3d9a4c;"></div>
<div class="a" style="left:9px;top:339.3px;width:1015px;height:1px;background:#70d4f0;"></div>
<div class="a" style="left:9px;top:357.9px;width:1015px;height:1px;background:#70d4f0;"></div>
<div class="a" style="left:2.5px;top:321px;width:1021.5px;height:1px;background:#cfd8e8;"></div>
<div class="a" style="left:8.5px;top:321.1px;width:1px;height:55.5px;background:rgba(205,235,255,0.8);"></div>
<div class="a" style="left:35.3px;top:321.1px;width:1px;height:55.5px;background:rgba(205,235,255,0.8);"></div>
<div class="a" style="left:61.8px;top:321.1px;width:1px;height:55.5px;background:rgba(205,235,255,0.8);"></div>
<div class="a" style="left:89.1px;top:321.1px;width:1px;height:55.5px;background:rgba(205,235,255,0.8);"></div>
<div class="a" style="left:113.0px;top:321.1px;width:1px;height:55.5px;background:rgba(205,235,255,0.8);"></div>
<div class="a" style="left:199.0px;top:321.1px;width:1px;height:55.5px;background:rgba(205,235,255,0.8);"></div>
<div class="a" style="left:228.0px;top:321.1px;width:1px;height:55.5px;background:rgba(205,235,255,0.8);"></div>
<div class="a" style="left:281.5px;top:321.1px;width:1px;height:55.5px;background:rgba(205,235,255,0.8);"></div>
<div class="a" style="left:335.0px;top:321.1px;width:1px;height:55.5px;background:rgba(205,235,255,0.8);"></div>
<div class="a" style="left:388.0px;top:321.1px;width:1px;height:55.5px;background:rgba(205,235,255,0.8);"></div>
<div class="a" style="left:507.0px;top:321.1px;width:1px;height:55.5px;background:rgba(205,235,255,0.8);"></div>
<div class="a" style="left:548.0px;top:321.1px;width:1px;height:55.5px;background:rgba(205,235,255,0.8);"></div>
<div class="a" style="left:581.8px;top:321.1px;width:1px;height:55.5px;background:rgba(205,235,255,0.8);"></div>
<div class="a" style="left:617.8px;top:321.1px;width:1px;height:55.5px;background:rgba(205,235,255,0.8);"></div>
<div class="a" style="left:671.3px;top:321.1px;width:1px;height:55.5px;background:rgba(205,235,255,0.8);"></div>
<div class="a" style="left:725.0px;top:321.1px;width:1px;height:55.5px;background:rgba(205,235,255,0.8);"></div>
<div class="a" style="left:778.0px;top:321.1px;width:1px;height:55.5px;background:rgba(205,235,255,0.8);"></div>
<div class="a" style="left:832.0px;top:321.1px;width:1px;height:55.5px;background:rgba(205,235,255,0.8);"></div>
<div class="a" style="left:885.0px;top:321.1px;width:1px;height:55.5px;background:rgba(205,235,255,0.8);"></div>
<div class="a" style="left:938.2px;top:321.1px;width:1px;height:55.5px;background:rgba(205,235,255,0.8);"></div>
<div class="a" style="left:2.5px;top:376.6px;width:1021.5px;height:1px;background:#e8f0f8;"></div>
<svg class="a" style="left:4px;top:328.5px" width="5" height="5" viewBox="0 0 5 5"><path d="M0.8 0.6 L3.6 2.5 L0.8 4.4" fill="none" stroke="#222" stroke-width="1.2"/></svg>
<div class="t g" style="left:10.5px;width:28.3px;overflow:hidden;top:327.69px;font-size:7.67px;color:#e6ecfa;transform:scaleX(0.893);transform-origin:0 50%;">1</div>
<div class="t g" style="left:115.0px;width:94.6px;overflow:hidden;top:327.69px;font-size:7.67px;color:#e6ecfa;transform:scaleX(0.893);transform-origin:0 50%;">12025205255762</div>
<div class="t g" style="left:201.0px;width:30.8px;overflow:hidden;top:327.69px;font-size:7.67px;color:#e6ecfa;transform:scaleX(0.893);transform-origin:0 50%;">5762</div>
<div class="t g" style="left:230.0px;width:58.2px;overflow:hidden;top:327.69px;font-size:7.67px;color:#e6ecfa;transform:scaleX(0.893);transform-origin:0 50%;">34erd34</div>
<div class="t g" style="left:509.0px;width:44.2px;overflow:hidden;top:327.69px;font-size:7.67px;color:#e6ecfa;transform:scaleX(0.893);transform-origin:0 50%;">05.02.20</div>
<div class="a" style="left:543.0px;top:330.5px;width:2px;height:0.8px;background:#e6ecfa;opacity:.35"></div>
<div class="t g" style="left:550.0px;width:36.2px;overflow:hidden;top:327.69px;font-size:7.67px;color:#e6ecfa;transform:scaleX(0.893);transform-origin:0 50%;">06:32</div>
<div class="a" style="left:576.8px;top:330.5px;width:2px;height:0.8px;background:#e6ecfa;opacity:.35"></div>
<div class="t g" style="left:582.3px;width:33.0px;text-align:right;top:327.69px;font-size:7.67px;color:#e6ecfa;transform:scaleX(0.893);transform-origin:100% 50%;">12.000</div>
<div class="t g" style="left:673.3px;width:58.5px;overflow:hidden;top:327.69px;font-size:7.67px;color:#e6ecfa;transform:scaleX(0.893);transform-origin:0 50%;">erdoğan</div>
<svg class="a" style="left:41.5px;top:322.6px" width="16" height="16" viewBox="0 0 16 16"><rect x="3" y="0.8" width="9.5" height="7" fill="#f2f2f6" stroke="#d0d0da" stroke-width="0.4"/><path d="M0.5 6 q0 -1 1 -1 h12.5 q1 0 1 1 v6.5 h-14.5 z" fill="#ececf2"/><rect x="2.5" y="5.2" width="10.5" height="2.4" fill="#4c4c60"/><rect x="1" y="9" width="13.5" height="1.2" fill="#555568"/><rect x="2.5" y="12" width="10.5" height="2.8" fill="#dfe4f0" stroke="#b8c0d4" stroke-width="0.5"/></svg>
<svg class="a" style="left:68.5px;top:323.6px" width="15" height="14" viewBox="0 0 15 14"><defs><linearGradient id="xg0" x1="0" y1="0" x2="1" y2="1"><stop offset="0" stop-color="#f09070"/><stop offset="0.5" stop-color="#e84a2a"/><stop offset="1" stop-color="#c83020"/></linearGradient></defs><path d="M2.6 2.4 L12.4 11.6 M12.4 2.4 L2.6 11.6" stroke-width="2.9" stroke="url(#xg0)" stroke-linecap="round"/></svg>
<svg class="a" style="left:96px;top:322.9px" width="11" height="15" viewBox="0 0 11 15"><path d="M5.3 0.8 L10 6.5 H7.3 V11.5 H3.3 V6.5 H0.6 z" fill="#a9d4ee" stroke="#8cc0e4" stroke-width="0.5"/><rect x="1.5" y="13" width="8" height="1.2" fill="#9cc8e6" opacity=".8"/></svg>
<div class="t g" style="left:10.5px;width:28.3px;overflow:hidden;top:346.39px;font-size:7.67px;color:#0a1e2e;transform:scaleX(0.893);transform-origin:0 50%;">2</div>
<div class="t g" style="left:115.0px;width:94.6px;overflow:hidden;top:346.39px;font-size:7.67px;color:#0a1e2e;transform:scaleX(0.893);transform-origin:0 50%;">12025205255763</div>
<div class="t g" style="left:201.0px;width:30.8px;overflow:hidden;top:346.39px;font-size:7.67px;color:#0a1e2e;transform:scaleX(0.893);transform-origin:0 50%;">5763</div>
<div class="t g" style="left:230.0px;width:58.2px;overflow:hidden;top:346.38px;font-size:7.67px;color:#0a1e2e;transform:scaleX(0.893);transform-origin:0 50%;">34YC3368</div>
<div class="t g" style="left:337.0px;width:57.7px;overflow:hidden;top:346.39px;font-size:7.67px;color:#0a1e2e;transform:scaleX(0.893);transform-origin:0 50%;">40-90 mm Parça</div>
<div class="t g" style="left:390.0px;width:144.2px;overflow:hidden;top:346.38px;font-size:7.67px;color:#0a1e2e;transform:scaleX(0.815);transform-origin:0 50%;">GÜNCEM MADENCİLİK İNŞ. SAN. TİC. I</div>
<div class="t g" style="left:509.0px;width:44.2px;overflow:hidden;top:346.39px;font-size:7.67px;color:#0a1e2e;transform:scaleX(0.893);transform-origin:0 50%;">06.02.20</div>
<div class="a" style="left:543.0px;top:349.1px;width:2px;height:0.8px;background:#0e2a3c;opacity:.6"></div>
<div class="t g" style="left:550.0px;width:36.2px;overflow:hidden;top:346.39px;font-size:7.67px;color:#0a1e2e;transform:scaleX(0.893);transform-origin:0 50%;">17:16</div>
<div class="a" style="left:576.8px;top:349.1px;width:2px;height:0.8px;background:#0e2a3c;opacity:.6"></div>
<div class="t g" style="left:582.3px;width:33.0px;text-align:right;top:346.39px;font-size:7.67px;color:#0a1e2e;transform:scaleX(0.893);transform-origin:100% 50%;">65.588</div>
<div class="t g" style="left:673.3px;width:58.5px;overflow:hidden;top:346.39px;font-size:7.67px;color:#0a1e2e;transform:scaleX(0.893);transform-origin:0 50%;">erdoğan</div>
<div class="t g" style="left:727.0px;width:63.2px;overflow:hidden;top:346.38px;font-size:7.67px;color:#0a1e2e;transform:scaleX(0.815);transform-origin:0 50%;">ANADOLU AKARY</div>
<div class="t g" style="left:780.0px;width:58.8px;overflow:hidden;top:346.39px;font-size:7.67px;color:#0a1e2e;transform:scaleX(0.893);transform-origin:0 50%;">a gittiği</div>
<div class="t g" style="left:834.0px;width:57.7px;overflow:hidden;top:346.39px;font-size:7.67px;color:#0a1e2e;transform:scaleX(0.893);transform-origin:0 50%;">araç tipi</div>
<div class="t g" style="left:887.0px;width:63.5px;overflow:hidden;top:346.38px;font-size:7.67px;color:#0a1e2e;transform:scaleX(0.815);transform-origin:0 50%;">ANADOLU AKARY</div>
<svg class="a" style="left:41.5px;top:341.3px" width="16" height="16" viewBox="0 0 16 16"><rect x="3" y="0.8" width="9.5" height="7" fill="#f2f2f6" stroke="#d0d0da" stroke-width="0.4"/><path d="M0.5 6 q0 -1 1 -1 h12.5 q1 0 1 1 v6.5 h-14.5 z" fill="#ececf2"/><rect x="2.5" y="5.2" width="10.5" height="2.4" fill="#4c4c60"/><rect x="1" y="9" width="13.5" height="1.2" fill="#555568"/><rect x="2.5" y="12" width="10.5" height="2.8" fill="#dfe4f0" stroke="#b8c0d4" stroke-width="0.5"/></svg>
<svg class="a" style="left:68.5px;top:342.3px" width="15" height="14" viewBox="0 0 15 14"><defs><linearGradient id="xg1" x1="0" y1="0" x2="1" y2="1"><stop offset="0" stop-color="#f09070"/><stop offset="0.5" stop-color="#e84a2a"/><stop offset="1" stop-color="#c83020"/></linearGradient></defs><path d="M2.6 2.4 L12.4 11.6 M12.4 2.4 L2.6 11.6" stroke-width="2.9" stroke="url(#xg1)" stroke-linecap="round"/></svg>
<svg class="a" style="left:96px;top:341.6px" width="11" height="15" viewBox="0 0 11 15"><path d="M5.3 0.8 L10 6.5 H7.3 V11.5 H3.3 V6.5 H0.6 z" fill="#a9d4ee" stroke="#8cc0e4" stroke-width="0.5"/><rect x="1.5" y="13" width="8" height="1.2" fill="#9cc8e6" opacity=".8"/></svg>
<div class="t g" style="left:10.5px;width:28.3px;overflow:hidden;top:364.79px;font-size:7.67px;color:#0a1e2e;transform:scaleX(0.893);transform-origin:0 50%;">3</div>
<div class="t g" style="left:115.0px;width:94.6px;overflow:hidden;top:364.79px;font-size:7.67px;color:#0a1e2e;transform:scaleX(0.893);transform-origin:0 50%;">12025205255761</div>
<div class="t g" style="left:201.0px;width:30.8px;overflow:hidden;top:364.79px;font-size:7.67px;color:#0a1e2e;transform:scaleX(0.893);transform-origin:0 50%;">5761</div>
<div class="t g" style="left:230.0px;width:58.2px;overflow:hidden;top:364.79px;font-size:7.67px;color:#0a1e2e;transform:scaleX(0.893);transform-origin:0 50%;">34abc111</div>
<div class="t g" style="left:337.0px;width:57.7px;overflow:hidden;top:364.79px;font-size:7.67px;color:#0a1e2e;transform:scaleX(0.893);transform-origin:0 50%;">a malzeme</div>
<div class="t g" style="left:390.0px;width:144.2px;overflow:hidden;top:364.78px;font-size:7.67px;color:#0a1e2e;transform:scaleX(0.815);transform-origin:0 50%;">EREĞLİ DEMİR VE ÇELİK FABRİKALARI</div>
<div class="t g" style="left:509.0px;width:44.2px;overflow:hidden;top:364.79px;font-size:7.67px;color:#0a1e2e;transform:scaleX(0.893);transform-origin:0 50%;">05.02.20</div>
<div class="a" style="left:543.0px;top:367.5px;width:2px;height:0.8px;background:#0e2a3c;opacity:.6"></div>
<div class="t g" style="left:550.0px;width:36.2px;overflow:hidden;top:364.79px;font-size:7.67px;color:#0a1e2e;transform:scaleX(0.893);transform-origin:0 50%;">22:51</div>
<div class="a" style="left:576.8px;top:367.5px;width:2px;height:0.8px;background:#0e2a3c;opacity:.6"></div>
<div class="t g" style="left:582.3px;width:33.0px;text-align:right;top:364.79px;font-size:7.67px;color:#0a1e2e;transform:scaleX(0.893);transform-origin:100% 50%;">14.570</div>
<div class="t g" style="left:619.8px;width:63.8px;overflow:hidden;top:364.78px;font-size:7.67px;color:#0a1e2e;transform:scaleX(0.815);transform-origin:0 50%;">ALİ KEMAL SAYG</div>
<div class="t g" style="left:673.3px;width:58.5px;overflow:hidden;top:364.79px;font-size:7.67px;color:#0a1e2e;transform:scaleX(0.893);transform-origin:0 50%;">erdoğan</div>
<div class="t g" style="left:727.0px;width:63.2px;overflow:hidden;top:364.78px;font-size:7.67px;color:#0a1e2e;transform:scaleX(0.815);transform-origin:0 50%;">GÜNCEM MADEN</div>
<div class="t g" style="left:780.0px;width:64.4px;overflow:hidden;top:364.78px;font-size:7.67px;color:#0a1e2e;transform:scaleX(0.815);transform-origin:0 50%;">EREĞLİ DEMİR VE</div>
<div class="t g" style="left:834.0px;width:57.7px;overflow:hidden;top:364.79px;font-size:7.67px;color:#0a1e2e;transform:scaleX(0.893);transform-origin:0 50%;">araç tipi</div>
<div class="t g" style="left:887.0px;width:57.9px;overflow:hidden;top:364.78px;font-size:7.67px;color:#0a1e2e;transform:scaleX(0.893);transform-origin:0 50%;">DS.0001</div>
<div class="t g" style="left:940.2px;width:93.8px;overflow:hidden;top:364.79px;font-size:7.67px;color:#0a1e2e;transform:scaleX(0.893);transform-origin:0 50%;">222</div>
<svg class="a" style="left:41.5px;top:359.9px" width="16" height="16" viewBox="0 0 16 16"><rect x="3" y="0.8" width="9.5" height="7" fill="#f2f2f6" stroke="#d0d0da" stroke-width="0.4"/><path d="M0.5 6 q0 -1 1 -1 h12.5 q1 0 1 1 v6.5 h-14.5 z" fill="#ececf2"/><rect x="2.5" y="5.2" width="10.5" height="2.4" fill="#4c4c60"/><rect x="1" y="9" width="13.5" height="1.2" fill="#555568"/><rect x="2.5" y="12" width="10.5" height="2.8" fill="#dfe4f0" stroke="#b8c0d4" stroke-width="0.5"/></svg>
<svg class="a" style="left:68.5px;top:360.9px" width="15" height="14" viewBox="0 0 15 14"><defs><linearGradient id="xg2" x1="0" y1="0" x2="1" y2="1"><stop offset="0" stop-color="#f09070"/><stop offset="0.5" stop-color="#e84a2a"/><stop offset="1" stop-color="#c83020"/></linearGradient></defs><path d="M2.6 2.4 L12.4 11.6 M12.4 2.4 L2.6 11.6" stroke-width="2.9" stroke="url(#xg2)" stroke-linecap="round"/></svg>
<svg class="a" style="left:96px;top:360.2px" width="11" height="15" viewBox="0 0 11 15"><path d="M5.3 0.8 L10 6.5 H7.3 V11.5 H3.3 V6.5 H0.6 z" fill="#a9d4ee" stroke="#8cc0e4" stroke-width="0.5"/><rect x="1.5" y="13" width="8" height="1.2" fill="#9cc8e6" opacity=".8"/></svg>
<!--/GRID-->
<!--STATUS-->
<div class="a" style="left:2.5px;top:537px;width:1021.5px;height:2.3px;background:#ababab;"></div>
<div class="a" style="left:0;top:539.3px;width:1024px;height:10.7px;background:#e5e5e5;"></div>
<div class="a" style="left:2px;top:540px;width:105.5px;height:9.5px;border:1px solid #c6c6c6;border-right-color:#f6f6f6;border-bottom-color:#f6f6f6;background:#e6e6e6;"></div>
<div class="t" style="left:4px;top:541.9px;font-size:6.94px;color:#3a3a3a;transform:scaleX(0.893);transform-origin:0 50%;">Elite Sistem Yazılım Hizmetleri</div>
<div class="a" style="left:109.5px;top:540px;width:47.0px;height:9.5px;border:1px solid #c6c6c6;border-right-color:#f6f6f6;border-bottom-color:#f6f6f6;background:#e6e6e6;"></div>
<div class="t" style="left:111.5px;top:541.9px;font-size:6.94px;color:#3a3a3a;transform:scaleX(0.893);transform-origin:0 50%;">Operatör</div>
<div class="a" style="left:158px;top:540px;width:77.80000000000001px;height:9.5px;border:1px solid #c6c6c6;border-right-color:#f6f6f6;border-bottom-color:#f6f6f6;background:#e6e6e6;"></div>
<div class="t" style="left:160px;top:541.9px;font-size:6.94px;color:#3a3a3a;transform:scaleX(0.893);transform-origin:0 50%;">erdoğan</div>
<div class="a" style="left:238px;top:540px;width:80.5px;height:9.5px;border:1px solid #c6c6c6;border-right-color:#f6f6f6;border-bottom-color:#f6f6f6;background:#e6e6e6;"></div>
<div class="t" style="left:240px;top:541.9px;font-size:6.94px;color:#3a3a3a;transform:scaleX(0.893);transform-origin:0 50%;">Sıradaki İşlem Numarası</div>
<div class="a" style="left:320.5px;top:540px;width:68.69999999999999px;height:9.5px;border:1px solid #c6c6c6;border-right-color:#f6f6f6;border-bottom-color:#f6f6f6;background:#e6e6e6;"></div>
<div class="t" style="left:322.5px;top:541.9px;font-size:6.94px;color:#3a3a3a;transform:scaleX(0.893);transform-origin:0 50%;">1202520625 - 5764</div>
<div class="a" style="left:391px;top:540px;width:25.80000000000001px;height:9.5px;border:1px solid #c6c6c6;border-right-color:#f6f6f6;border-bottom-color:#f6f6f6;background:#e6e6e6;"></div>
<div class="t" style="left:393px;top:541.9px;font-size:6.94px;color:#3a3a3a;transform:scaleX(0.893);transform-origin:0 50%;">Access</div>
<div class="a" style="left:419px;top:540px;width:30.19999999999999px;height:9.5px;border:1px solid #c6c6c6;border-right-color:#f6f6f6;border-bottom-color:#f6f6f6;background:#e6e6e6;"></div>
<div class="t" style="left:421px;top:541.9px;font-size:6.94px;color:#3a3a3a;transform:scaleX(0.893);transform-origin:0 50%;">00:01:44</div>
<!--/STATUS-->
</body></html>
